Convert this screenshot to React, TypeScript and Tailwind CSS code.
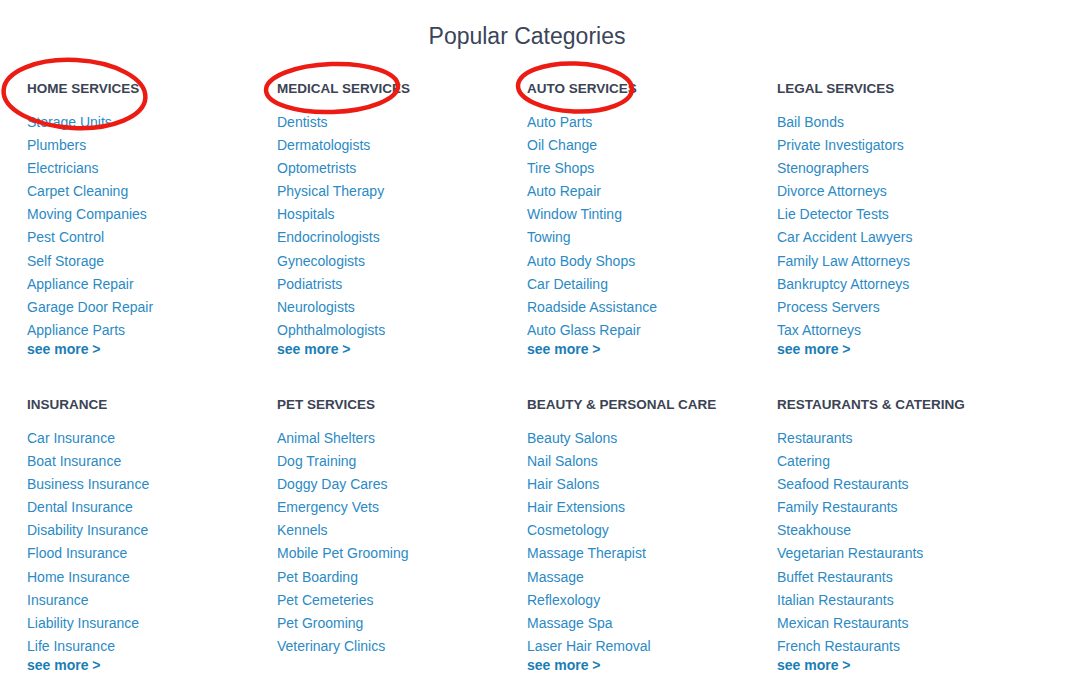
import React from 'react';

type Category = { title: string; links: string[]; more?: boolean };

const SECTIONS: Category[][] = [
  [
    {
      title: 'Home Services',
      more: true,
      links: ['Storage Units', 'Plumbers', 'Electricians', 'Carpet Cleaning', 'Moving Companies', 'Pest Control', 'Self Storage', 'Appliance Repair', 'Garage Door Repair', 'Appliance Parts'],
    },
    {
      title: 'Medical Services',
      more: true,
      links: ['Dentists', 'Dermatologists', 'Optometrists', 'Physical Therapy', 'Hospitals', 'Endocrinologists', 'Gynecologists', 'Podiatrists', 'Neurologists', 'Ophthalmologists'],
    },
    {
      title: 'Auto Services',
      more: true,
      links: ['Auto Parts', 'Oil Change', 'Tire Shops', 'Auto Repair', 'Window Tinting', 'Towing', 'Auto Body Shops', 'Car Detailing', 'Roadside Assistance', 'Auto Glass Repair'],
    },
    {
      title: 'Legal Services',
      more: true,
      links: ['Bail Bonds', 'Private Investigators', 'Stenographers', 'Divorce Attorneys', 'Lie Detector Tests', 'Car Accident Lawyers', 'Family Law Attorneys', 'Bankruptcy Attorneys', 'Process Servers', 'Tax Attorneys'],
    },
  ],
  [
    {
      title: 'Insurance',
      more: true,
      links: ['Car Insurance', 'Boat Insurance', 'Business Insurance', 'Dental Insurance', 'Disability Insurance', 'Flood Insurance', 'Home Insurance', 'Insurance', 'Liability Insurance', 'Life Insurance'],
    },
    {
      title: 'Pet Services',
      links: ['Animal Shelters', 'Dog Training', 'Doggy Day Cares', 'Emergency Vets', 'Kennels', 'Mobile Pet Grooming', 'Pet Boarding', 'Pet Cemeteries', 'Pet Grooming', 'Veterinary Clinics'],
    },
    {
      title: 'Beauty & Personal Care',
      more: true,
      links: ['Beauty Salons', 'Nail Salons', 'Hair Salons', 'Hair Extensions', 'Cosmetology', 'Massage Therapist', 'Massage', 'Reflexology', 'Massage Spa', 'Laser Hair Removal'],
    },
    {
      title: 'Restaurants & Catering',
      more: true,
      links: ['Restaurants', 'Catering', 'Seafood Restaurants', 'Family Restaurants', 'Steakhouse', 'Vegetarian Restaurants', 'Buffet Restaurants', 'Italian Restaurants', 'Mexican Restaurants', 'French Restaurants'],
    },
  ],
];

const CategoryColumn = ({ category }: { category: Category }) => (
  <div>
    <h3 className="text-[13.5px] leading-[20px] font-bold uppercase text-[#3b4354] mb-[12px]">{category.title}</h3>
    <ul>
      {category.links.map((link) => (
        <li key={link} className="text-[14px] leading-[23.1px] text-[#2b8ac4]">
          <a href="#">{link}</a>
        </li>
      ))}
    </ul>
    {category.more && (
      <a href="#" className="block text-[14px] leading-[15px] font-bold text-[#1a7db6]">
        see more &gt;
      </a>
    )}
  </div>
);

export default function App() {
  return (
    <div className="relative w-[1080px] h-[684px] bg-white overflow-hidden font-['Liberation_Sans',Arial,sans-serif]">
      <div className="w-[1000px] ml-[27px]">
        <h2 className="text-center text-[23px] leading-[26px] text-[#3b4559] pt-[23px] mb-[30px]">Popular Categories</h2>
        {SECTIONS.map((section, i) => (
          <div key={i} className={i === 0 ? 'grid grid-cols-4' : 'grid grid-cols-4 mt-[38px]'}>
            {section.map((cat) => (
              <CategoryColumn key={cat.title} category={cat} />
            ))}
          </div>
        ))}
      </div>

      {/* red annotation circles */}
      <svg className="absolute inset-0 pointer-events-none" width="1080" height="684" viewBox="0 0 1080 684">
        <g fill="none" stroke="#ec1c14" strokeWidth="4.5">
          <ellipse cx="74.5" cy="94" rx="71" ry="34" transform="rotate(3 74.5 94)" />
          <ellipse cx="332" cy="88" rx="66" ry="24" transform="rotate(-2 332 88)" />
          <ellipse cx="575" cy="87.5" rx="57" ry="24" transform="rotate(2 575 87.5)" />
        </g>
      </svg>
    </div>
  );
}
